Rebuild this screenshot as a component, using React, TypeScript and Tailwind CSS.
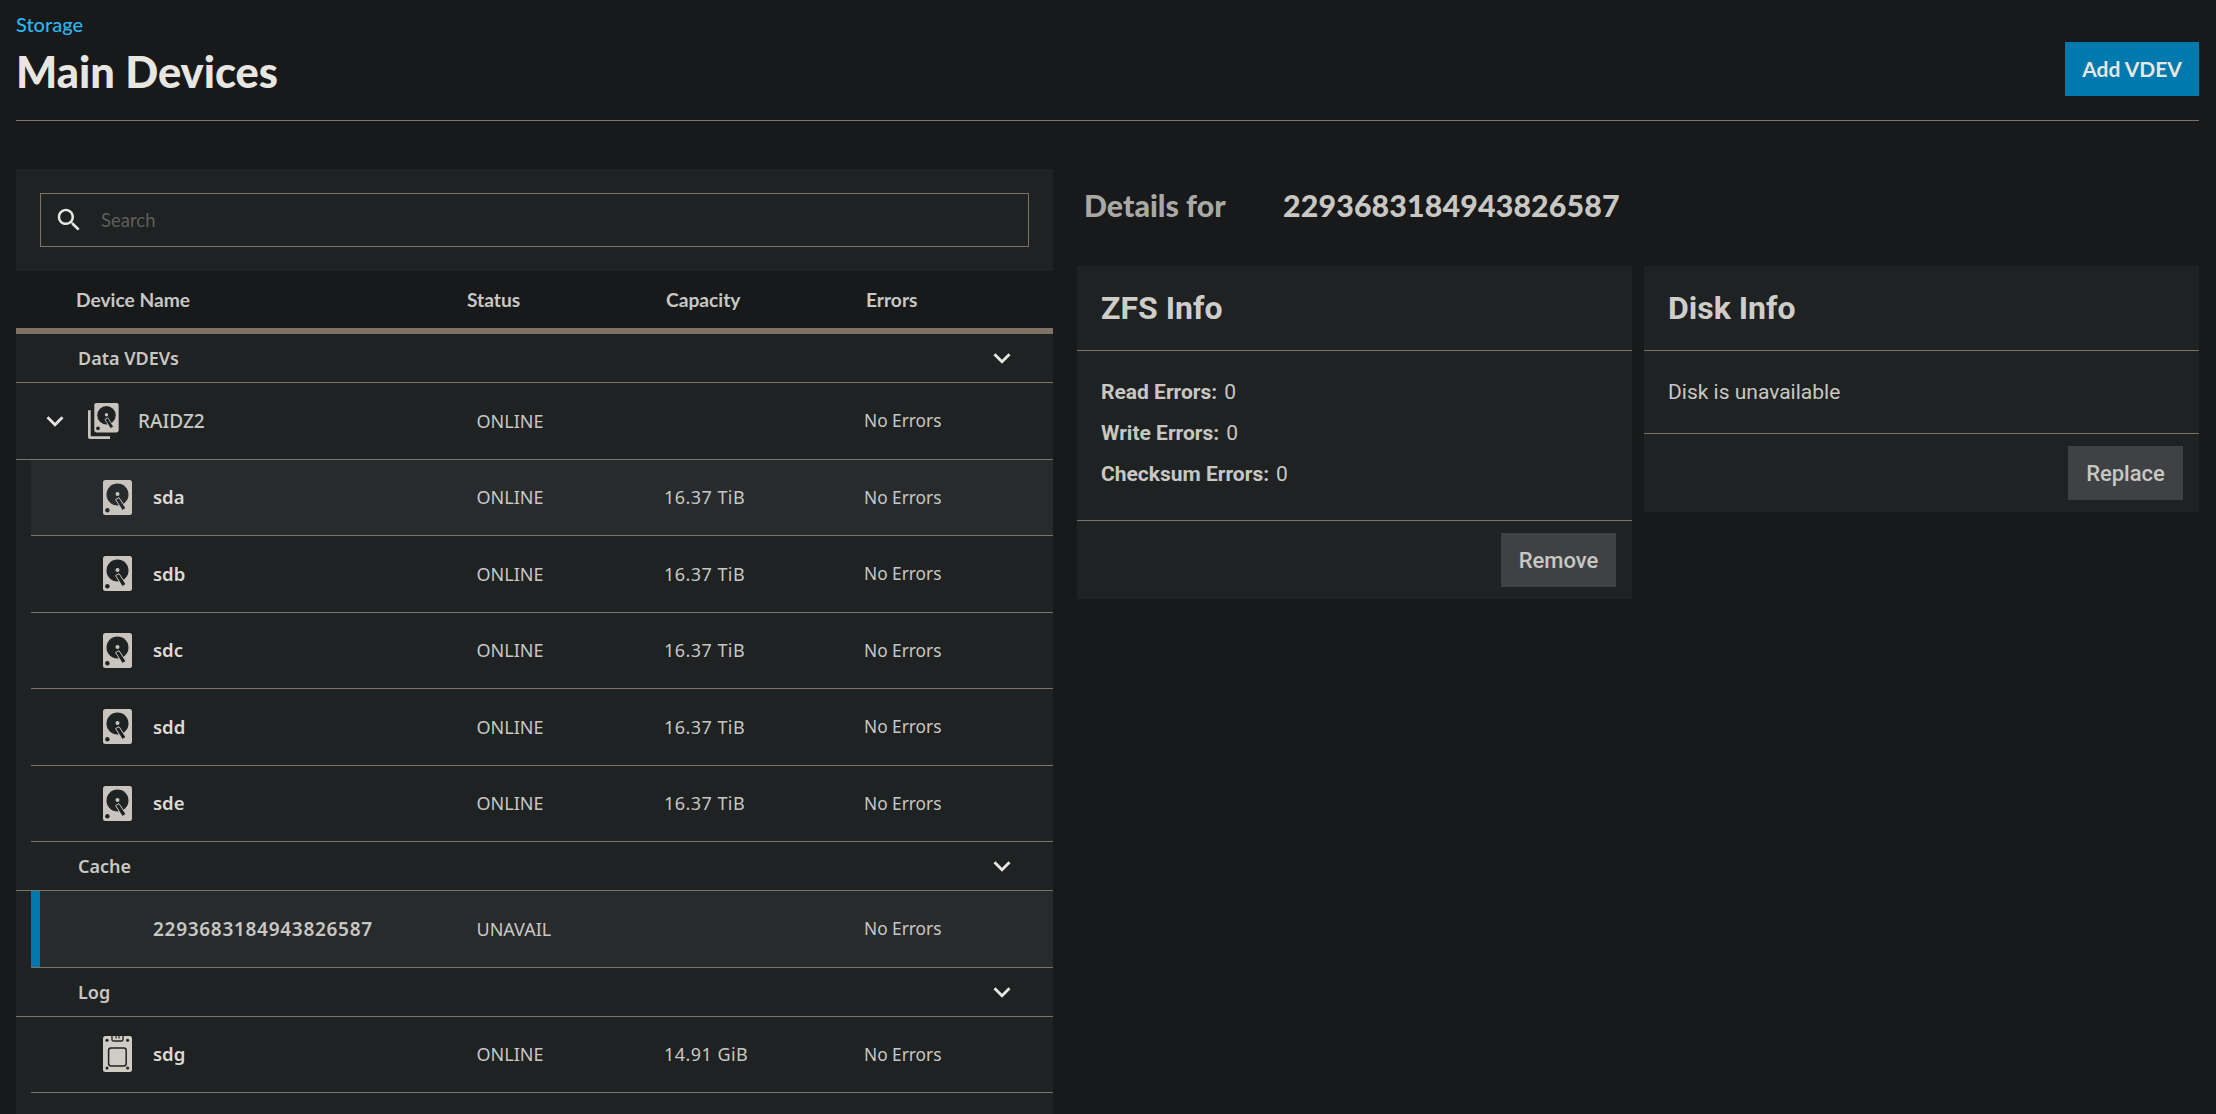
import React from "react";

const HEAD = "font-['Lato','Liberation_Sans',sans-serif]";
const BODY = "font-['Noto_Sans','Liberation_Sans',sans-serif]";
const ROBOTO = "font-['Roboto','Liberation_Sans',sans-serif]";

function Chevron() {
  return (
    <svg viewBox="0 0 24 24" className="h-[34px] w-[34px] shrink-0" fill="#e8e6e1">
      <path d="M16.59 8.59 12 13.17 7.41 8.59 6 10l6 6 6-6z" />
    </svg>
  );
}

function SearchIcon() {
  return (
    <svg viewBox="0 0 24 24" className="h-[30px] w-[30px] shrink-0" fill="#e8e6e1">
      <path d="M15.5 14h-.79l-.28-.27C15.41 12.59 16 11.11 16 9.5 16 5.91 13.09 3 9.5 3S3 5.91 3 9.5 5.91 16 9.5 16c1.61 0 3.09-.59 4.23-1.57l.27.28v.79l5 4.99L20.49 19l-4.99-5zm-6 0C7.01 14 5 11.99 5 9.5S7.01 5 9.5 5 14 7.01 14 9.5 11.99 14 9.5 14z" />
    </svg>
  );
}

function HddShape({ x = 0, y = 0, bg }: { x?: number; y?: number; bg: string }) {
  return (
    <g transform={`translate(${x} ${y})`}>
      <rect x="0" y="0" width="29" height="35" rx="2.5" fill="#c9c5be" />
      <circle cx="14.5" cy="14.5" r="11" fill={bg} />
      <circle cx="14.5" cy="14" r="2" fill="#c9c5be" />
      <path d="M12.6 19.6 16 17.6 23 28.3 19.3 30.4Z" fill={bg} stroke="#c9c5be" strokeWidth="1" />
      <circle cx="4.4" cy="30.2" r="2.2" fill={bg} />
    </g>
  );
}

function HddIcon({ bg = "#1e2223" }: { bg?: string }) {
  return (
    <svg viewBox="0 0 29 35" className="h-[35px] w-[29px] shrink-0">
      <HddShape bg={bg} />
    </svg>
  );
}

function StackIcon() {
  return (
    <svg viewBox="0 0 31 36" className="h-[36px] w-[31px] shrink-0">
      <path d="M0 7.3h2.7V33.3H22V36H2Q0 36 0 34Z" fill="#c9c5be" />
      <g transform="translate(6.3 0) scale(0.84 0.84)">
        <HddShape bg="#1e2223" />
      </g>
    </svg>
  );
}

function SsdIcon() {
  return (
    <svg viewBox="0 0 29 36" className="h-[36px] w-[29px] shrink-0">
      <rect width="29" height="36" rx="2.5" fill="#cfccc5" />
      <path d="M9 0V3.4Q9 5 10.6 5H18.4Q20 5 20 3.4V0" fill="none" stroke="#1e2223" strokeWidth="1.3" />
      <path d="M13 0V2.6M16 0V2.6" fill="none" stroke="#1e2223" strokeWidth="1.1" />
      <rect x="5.6" y="12" width="17.6" height="18" rx="2.4" fill="none" stroke="#1e2223" strokeWidth="1.5" />
      <circle cx="4" cy="4.3" r="1.5" fill="#1e2223" />
      <circle cx="24.6" cy="4.3" r="1.5" fill="#1e2223" />
      <circle cx="4" cy="32" r="1.5" fill="#1e2223" />
      <circle cx="24.6" cy="32" r="1.5" fill="#1e2223" />
    </svg>
  );
}

function Section({ label }: { label: string }) {
  return (
    <div className="flex h-[49px] items-center justify-between border-b border-[#7d7264] pl-[62px] pr-[34px]">
      <span className={`${BODY} text-[18px] font-semibold leading-none text-[#c9c7c2]`}>{label}</span>
      <Chevron />
    </div>
  );
}

function Cells({ status, capacity }: { status: string; capacity?: string }) {
  return (
    <>
      <span className="pt-[1px] text-[18px]">{status}</span>
      <span className="pt-[1px] text-[18px] tracking-[0.45px]">{capacity}</span>
      <span className="pt-[1px] text-[17.3px]">No Errors</span>
    </>
  );
}

function DiskRow({
  name,
  capacity,
  hover,
  ssd,
}: {
  name: string;
  capacity: string;
  hover?: boolean;
  ssd?: boolean;
}) {
  return (
    <div
      className={`ml-[15px] grid h-[76.5px] grid-cols-[445.5px_187.5px_200px_1fr] items-center border-b border-[#7d7264] ${BODY} text-[#c9c7c2] ${
        hover ? "bg-[#282b2e]" : ""
      }`}
    >
      <div className="flex items-center gap-[21px] pl-[72px]">
        {ssd ? <SsdIcon /> : <HddIcon bg={hover ? "#282b2e" : "#1e2223"} />}
        <span className="text-[18.5px] font-semibold text-[#dcdad5]">{name}</span>
      </div>
      <Cells status="ONLINE" capacity={capacity} />
    </div>
  );
}

function SelectedRow() {
  return (
    <div
      className={`ml-[15px] grid h-[76.5px] grid-cols-[445.5px_187.5px_200px_1fr] items-center border-b border-[#7d7264] bg-[#282b2e] ${BODY} text-[#c9c7c2]`}
    >
      <div className="flex h-full items-center">
        <div className="h-full w-[9px] bg-[#0079ae]" />
        <span className="pl-[113px] text-[19px] font-semibold tracking-[0.7px] text-[#c9c7c2]">
          2293683184943826587
        </span>
      </div>
      <Cells status="UNAVAIL" />
    </div>
  );
}

function Card({
  title,
  width,
  children,
  action,
}: {
  title: string;
  width: string;
  children: React.ReactNode;
  action: string;
}) {
  return (
    <section className={`${width} bg-[#1e2223] ${ROBOTO}`}>
      <h2 className="flex h-[85px] items-center border-b border-[#7d7264] px-[24px] text-[32px] font-bold text-[#cfcdc8]">
        {title}
      </h2>
      {children}
      <div className="flex justify-end border-t border-[#7d7264] py-[12px] pr-[16px]">
        <button className="h-[54px] w-[115px] bg-[#3e4245] text-[22px] font-medium text-[#c9c7c2]">{action}</button>
      </div>
    </section>
  );
}

function Err({ label }: { label: string }) {
  return (
    <div className="flex h-[41px] items-center gap-[7px] text-[21px] text-[#c9c7c2]">
      <span className="font-bold">{label}</span>
      <span>0</span>
    </div>
  );
}

export default function App() {
  return (
    <div className="h-[1114px] w-[2216px] overflow-hidden bg-[#17191b] pl-[16px] pr-[17px]">
      <header className="flex h-[121px] items-start justify-between border-b border-[#7d7264] pt-[10px]">
        <div>
          <div className={`${HEAD} text-[20px] font-medium leading-[28px] text-[#2fb6f0]`}>Storage</div>
          <h1 className={`${HEAD} mt-[8px] text-[43.4px] font-black leading-[50px] text-[#e8e6e1]`}>Main Devices</h1>
        </div>
        <button className={`${HEAD} mt-[32px] h-[54px] w-[134px] bg-[#0079ae] text-[21px] font-bold text-[#e8e6e1]`}>
          Add VDEV
        </button>
      </header>

      <main className="mt-[48px] flex gap-[24px]">
        <div className="w-[1037px] shrink-0">
          <div className="bg-[#1e2223] p-[24px]">
            <div className="flex h-[54px] items-center gap-[17px] border border-[#7d7264] pl-[13px]">
              <SearchIcon />
              <span className={`${HEAD} pt-[1px] text-[18.5px] text-[#5e5e5c]`}>Search</span>
            </div>
          </div>
          <div
            className={`grid h-[57px] grid-cols-[451px_199px_200px_1fr] items-center pt-[1px] ${HEAD} text-[19.2px] font-bold text-[#c9c7c2]`}
          >
            <span className="pl-[60px]">Device Name</span>
            <span>Status</span>
            <span>Capacity</span>
            <span>Errors</span>
          </div>
          <div className="h-[800px] border-t-[6px] border-[#7d7264] bg-[#1e2223]">
            <Section label="Data VDEVs" />
            <div
              className={`grid h-[76.5px] grid-cols-[460.5px_187.5px_200px_1fr] items-center border-b border-[#7d7264] ${BODY} text-[#c9c7c2]`}
            >
              <div className="flex items-center pl-[22px]">
                <Chevron />
                <div className="ml-[16px]">
                  <StackIcon />
                </div>
                <span className="ml-[19px] text-[19px] font-medium">RAIDZ2</span>
              </div>
              <Cells status="ONLINE" />
            </div>
            <DiskRow name="sda" capacity="16.37 TiB" hover />
            <DiskRow name="sdb" capacity="16.37 TiB" />
            <DiskRow name="sdc" capacity="16.37 TiB" />
            <DiskRow name="sdd" capacity="16.37 TiB" />
            <DiskRow name="sde" capacity="16.37 TiB" />
            <Section label="Cache" />
            <SelectedRow />
            <Section label="Log" />
            <DiskRow name="sdg" capacity="14.91 GiB" ssd />
          </div>
        </div>

        <div className="min-w-0 flex-1">
          <div className={`mb-[23px] flex h-[74px] items-center pl-[7px] ${HEAD} text-[30.3px] font-black text-[#a9a8a4]`}>
            <span className="w-[199px]">Details for</span>
            <span className="tracking-[0.15px] text-[#c9c7c2]">2293683184943826587</span>
          </div>
          <div className="flex items-start gap-[12px]">
            <Card title="ZFS Info" width="w-[555px]" action="Remove">
              <div className="px-[24px] pb-[25px] pt-[21px]">
                <Err label="Read Errors:" />
                <Err label="Write Errors:" />
                <Err label="Checksum Errors:" />
              </div>
            </Card>
            <Card title="Disk Info" width="flex-1" action="Replace">
              <div className="flex h-[82px] items-center px-[24px] pt-[1px] text-[21px] text-[#c9c7c2]">
                Disk is unavailable
              </div>
            </Card>
          </div>
        </div>
      </main>
    </div>
  );
}
